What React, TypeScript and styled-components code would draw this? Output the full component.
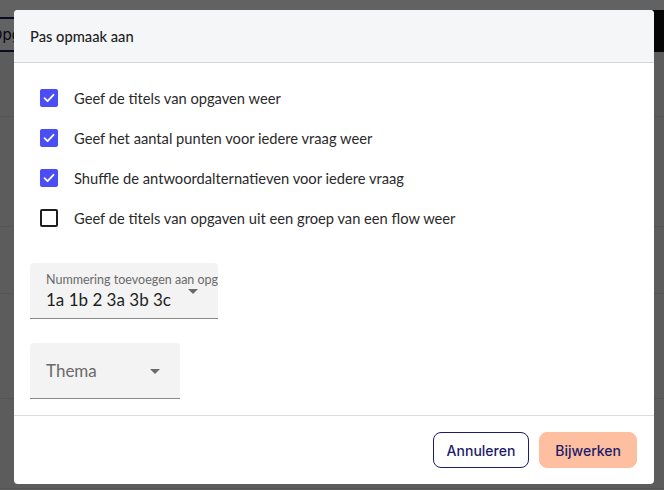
import React from "react";
import styled, { createGlobalStyle } from "styled-components";

const Global = createGlobalStyle`
  html, body { margin: 0; padding: 0; }
  body {
    width: 664px;
    height: 490px;
    overflow: hidden;
    font-family: "Lato", "Noto Sans", sans-serif;
    background: #ffffff;
  }
  * { box-sizing: border-box; }
`;

const Page = styled.div`
  position: relative;
  width: 664px;
  height: 490px;
  background: #f4f4f4;
  display: flex;
  flex-direction: column;
`;

const TopBar = styled.div`
  height: 52px;
  display: flex;
  align-items: flex-end;
  justify-content: space-between;
  background: #ffffff;
`;

const Tab = styled.div`
  height: 35px;
  padding: 0 10px 0 0;
  margin-left: -9px;
  display: flex;
  align-items: center;
  border-top: 2px solid #1a1a5e;
  border-bottom: 2px solid #1a1a5e;
  font-family: "Inter", sans-serif;
  font-size: 15px;
  color: #111133;
`;

const DarkBlock = styled.div`
  width: 12px;
  height: 42px;
  background: #111;
`;

const BgRow = styled.div<{ $h: number }>`
  height: ${(p) => p.$h}px;
  border-bottom: 1px solid #dadada;
  background: #f0f0f0;
`;

const Overlay = styled.div`
  position: absolute;
  inset: 0;
  background: rgba(0, 0, 0, 0.615);
  padding: 10px 0 0 14px;
  display: flex;
  align-items: flex-start;
`;

const Dialog = styled.div`
  width: 640px;
  height: 474px;
  background: #ffffff;
  border-radius: 4px;
  overflow: hidden;
  display: flex;
  flex-direction: column;
`;

const Header = styled.div`
  height: 53px;
  flex: none;
  background: #f5f6f8;
  border-bottom: 1px solid #d2d5da;
  display: flex;
  align-items: center;
  padding: 0 16px;
  font-size: 14.7px;
  color: #1f1f1f;
  font-weight: 500;
`;

const Body = styled.div`
  flex: 1;
  padding: 26px 16px 0 26px;
  display: flex;
  flex-direction: column;
`;

const CheckList = styled.div`
  display: flex;
  flex-direction: column;
  gap: 22px;
`;

const CheckRow = styled.label`
  display: flex;
  align-items: center;
  gap: 16px;
  height: 18px;
  font-size: 14.7px;
  color: #2a2a2a;
`;

const Box = styled.span<{ $checked: boolean }>`
  width: 18px;
  height: 18px;
  flex: none;
  border-radius: 2px;
  display: flex;
  align-items: center;
  justify-content: center;
  background: ${(p) => (p.$checked ? "#4b4ef5" : "#ffffff")};
  border: ${(p) => (p.$checked ? "none" : "2px solid #1e1e1e")};
`;

const Selects = styled.div`
  display: flex;
  flex-direction: column;
  gap: 24px;
  margin-top: 36px;
  margin-left: -10px;
`;

const SelectBox = styled.div<{ $w: number }>`
  position: relative;
  width: ${(p) => p.$w}px;
  height: 56px;
  background: #f3f3f3;
  border-radius: 4px 4px 0 0;
  border-bottom: 1px solid #8a8a8a;
  padding: 0 16px;
  overflow: hidden;
  display: flex;
  flex-direction: column;
  justify-content: center;
`;

const SelectLabel = styled.div`
  font-size: 12.5px;
  color: #6a6a6a;
  white-space: nowrap;
  line-height: 14px;
  margin-top: 2px;
`;

const SelectValue = styled.div`
  font-size: 17px;
  color: #1e1e1e;
  line-height: 20px;
  margin-top: 3px;
`;

const Placeholder = styled.div`
  font-size: 17px;
  color: #6a6a6a;
  line-height: 20px;
`;

const Arrow = styled.span<{ $top: number }>`
  position: absolute;
  right: 20px;
  top: ${(p) => p.$top}px;
  width: 0;
  height: 0;
  border-left: 5px solid transparent;
  border-right: 5px solid transparent;
  border-top: 5px solid #6a6a6a;
`;

const Footer = styled.div`
  height: 69px;
  flex: none;
  border-top: 1px solid #dcdcdc;
  display: flex;
  align-items: center;
  justify-content: flex-end;
  gap: 10px;
  padding: 0 17px 0 0;
`;

const Button = styled.button<{ $primary?: boolean }>`
  height: 36px;
  padding: 0 ${(p) => (p.$primary ? 15 : 13)}px;
  border-radius: 8px;
  font-family: "Inter", "Lato", sans-serif;
  font-size: 14px;
  font-weight: 500;
  color: #1c1c6b;
  background: ${(p) => (p.$primary ? "#fdbf9f" : "#ffffff")};
  border: ${(p) => (p.$primary ? "1px solid #fdbf9f" : "1px solid #1c1c6b")};
  cursor: pointer;
`;

const Check = () => (
  <svg width="12" height="10" viewBox="0 0 12 10">
    <path d="M1.5 5.2 L4.6 8.2 L10.5 1.8" fill="none" stroke="#fff" strokeWidth="1.8" strokeLinecap="round" strokeLinejoin="round" />
  </svg>
);

const items = [
  { label: "Geef de titels van opgaven weer", checked: true },
  { label: "Geef het aantal punten voor iedere vraag weer", checked: true },
  { label: "Shuffle de antwoordalternatieven voor iedere vraag", checked: true },
  { label: "Geef de titels van opgaven uit een groep van een flow weer", checked: false },
];

export default function App() {
  return (
    <>
      <Global />
      <Page>
        <TopBar>
          <Tab>Opgaven</Tab>
          <DarkBlock />
        </TopBar>
        <BgRow $h={65} />
        <BgRow $h={110} />
        <BgRow $h={67} />
        <BgRow $h={105} />
        <BgRow $h={90} />
      </Page>
      <Overlay>
        <Dialog>
          <Header>Pas opmaak aan</Header>
          <Body>
            <CheckList>
              {items.map((it) => (
                <CheckRow key={it.label}>
                  <Box $checked={it.checked}>{it.checked && <Check />}</Box>
                  {it.label}
                </CheckRow>
              ))}
            </CheckList>
            <Selects>
              <SelectBox $w={188}>
                <SelectLabel>Nummering toevoegen aan opgaven</SelectLabel>
                <SelectValue>1a 1b 2 3a 3b 3c</SelectValue>
                <Arrow $top={26} />
              </SelectBox>
              <SelectBox $w={150}>
                <Placeholder>Thema</Placeholder>
                <Arrow $top={26} />
              </SelectBox>
            </Selects>
          </Body>
          <Footer>
            <Button>Annuleren</Button>
            <Button $primary>Bijwerken</Button>
          </Footer>
        </Dialog>
      </Overlay>
    </>
  );
}
